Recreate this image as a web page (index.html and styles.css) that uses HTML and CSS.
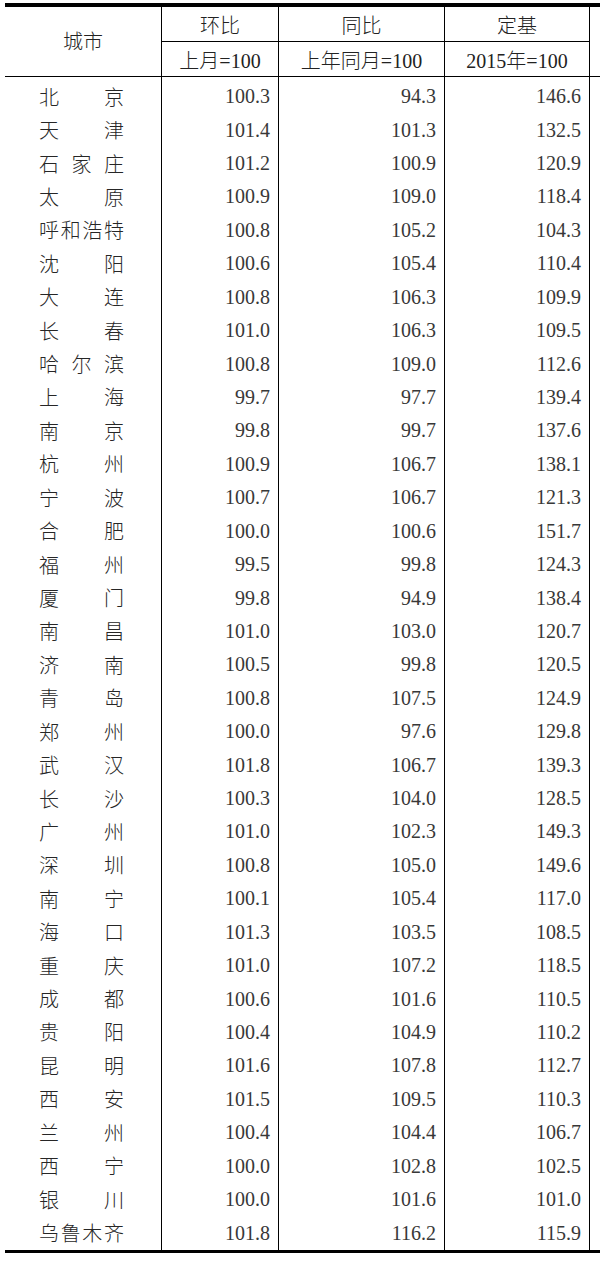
FILE: index.html
```html
<!DOCTYPE html>
<html lang="zh-CN">
<head>
<meta charset="utf-8">
<title>70城房价指数</title>
<link rel="stylesheet" href="styles.css">
</head>
<body>
<div class="page">
  <div class="sheet">
    <div class="cell head city-head">城市</div>
    <div class="cell head h1 v">环比</div>
    <div class="cell head h1 v">同比</div>
    <div class="cell head h1 v">定基</div>
    <div class="cell head extra v"></div>
    <div class="cell head h2 v">上月=100</div>
    <div class="cell head h2 v">上年同月=100</div>
    <div class="cell head h2 v">2015年=100</div>

    <div class="cell city top"><span>北京</span></div><div class="cell num v top">100.3</div><div class="cell num v top">94.3</div><div class="cell num v top">146.6</div><div class="cell v top"></div>
    <div class="cell city"><span>天津</span></div><div class="cell num v">101.4</div><div class="cell num v">101.3</div><div class="cell num v">132.5</div><div class="cell v"></div>
    <div class="cell city"><span>石家庄</span></div><div class="cell num v">101.2</div><div class="cell num v">100.9</div><div class="cell num v">120.9</div><div class="cell v"></div>
    <div class="cell city"><span>太原</span></div><div class="cell num v">100.9</div><div class="cell num v">109.0</div><div class="cell num v">118.4</div><div class="cell v"></div>
    <div class="cell city"><span>呼和浩特</span></div><div class="cell num v">100.8</div><div class="cell num v">105.2</div><div class="cell num v">104.3</div><div class="cell v"></div>
    <div class="cell city"><span>沈阳</span></div><div class="cell num v">100.6</div><div class="cell num v">105.4</div><div class="cell num v">110.4</div><div class="cell v"></div>
    <div class="cell city"><span>大连</span></div><div class="cell num v">100.8</div><div class="cell num v">106.3</div><div class="cell num v">109.9</div><div class="cell v"></div>
    <div class="cell city"><span>长春</span></div><div class="cell num v">101.0</div><div class="cell num v">106.3</div><div class="cell num v">109.5</div><div class="cell v"></div>
    <div class="cell city"><span>哈尔滨</span></div><div class="cell num v">100.8</div><div class="cell num v">109.0</div><div class="cell num v">112.6</div><div class="cell v"></div>
    <div class="cell city"><span>上海</span></div><div class="cell num v">99.7</div><div class="cell num v">97.7</div><div class="cell num v">139.4</div><div class="cell v"></div>
    <div class="cell city"><span>南京</span></div><div class="cell num v">99.8</div><div class="cell num v">99.7</div><div class="cell num v">137.6</div><div class="cell v"></div>
    <div class="cell city"><span>杭州</span></div><div class="cell num v">100.9</div><div class="cell num v">106.7</div><div class="cell num v">138.1</div><div class="cell v"></div>
    <div class="cell city"><span>宁波</span></div><div class="cell num v">100.7</div><div class="cell num v">106.7</div><div class="cell num v">121.3</div><div class="cell v"></div>
    <div class="cell city"><span>合肥</span></div><div class="cell num v">100.0</div><div class="cell num v">100.6</div><div class="cell num v">151.7</div><div class="cell v"></div>
    <div class="cell city"><span>福州</span></div><div class="cell num v">99.5</div><div class="cell num v">99.8</div><div class="cell num v">124.3</div><div class="cell v"></div>
    <div class="cell city"><span>厦门</span></div><div class="cell num v">99.8</div><div class="cell num v">94.9</div><div class="cell num v">138.4</div><div class="cell v"></div>
    <div class="cell city"><span>南昌</span></div><div class="cell num v">101.0</div><div class="cell num v">103.0</div><div class="cell num v">120.7</div><div class="cell v"></div>
    <div class="cell city"><span>济南</span></div><div class="cell num v">100.5</div><div class="cell num v">99.8</div><div class="cell num v">120.5</div><div class="cell v"></div>
    <div class="cell city"><span>青岛</span></div><div class="cell num v">100.8</div><div class="cell num v">107.5</div><div class="cell num v">124.9</div><div class="cell v"></div>
    <div class="cell city"><span>郑州</span></div><div class="cell num v">100.0</div><div class="cell num v">97.6</div><div class="cell num v">129.8</div><div class="cell v"></div>
    <div class="cell city"><span>武汉</span></div><div class="cell num v">101.8</div><div class="cell num v">106.7</div><div class="cell num v">139.3</div><div class="cell v"></div>
    <div class="cell city"><span>长沙</span></div><div class="cell num v">100.3</div><div class="cell num v">104.0</div><div class="cell num v">128.5</div><div class="cell v"></div>
    <div class="cell city"><span>广州</span></div><div class="cell num v">101.0</div><div class="cell num v">102.3</div><div class="cell num v">149.3</div><div class="cell v"></div>
    <div class="cell city"><span>深圳</span></div><div class="cell num v">100.8</div><div class="cell num v">105.0</div><div class="cell num v">149.6</div><div class="cell v"></div>
    <div class="cell city"><span>南宁</span></div><div class="cell num v">100.1</div><div class="cell num v">105.4</div><div class="cell num v">117.0</div><div class="cell v"></div>
    <div class="cell city"><span>海口</span></div><div class="cell num v">101.3</div><div class="cell num v">103.5</div><div class="cell num v">108.5</div><div class="cell v"></div>
    <div class="cell city"><span>重庆</span></div><div class="cell num v">101.0</div><div class="cell num v">107.2</div><div class="cell num v">118.5</div><div class="cell v"></div>
    <div class="cell city"><span>成都</span></div><div class="cell num v">100.6</div><div class="cell num v">101.6</div><div class="cell num v">110.5</div><div class="cell v"></div>
    <div class="cell city"><span>贵阳</span></div><div class="cell num v">100.4</div><div class="cell num v">104.9</div><div class="cell num v">110.2</div><div class="cell v"></div>
    <div class="cell city"><span>昆明</span></div><div class="cell num v">101.6</div><div class="cell num v">107.8</div><div class="cell num v">112.7</div><div class="cell v"></div>
    <div class="cell city"><span>西安</span></div><div class="cell num v">101.5</div><div class="cell num v">109.5</div><div class="cell num v">110.3</div><div class="cell v"></div>
    <div class="cell city"><span>兰州</span></div><div class="cell num v">100.4</div><div class="cell num v">104.4</div><div class="cell num v">106.7</div><div class="cell v"></div>
    <div class="cell city"><span>西宁</span></div><div class="cell num v">100.0</div><div class="cell num v">102.8</div><div class="cell num v">102.5</div><div class="cell v"></div>
    <div class="cell city"><span>银川</span></div><div class="cell num v">100.0</div><div class="cell num v">101.6</div><div class="cell num v">101.0</div><div class="cell v"></div>
    <div class="cell city"><span>乌鲁木齐</span></div><div class="cell num v">101.8</div><div class="cell num v">116.2</div><div class="cell num v">115.9</div><div class="cell v"></div>
  </div>
</div>
</body>
</html>
```
FILE: styles.css
```css
html, body {
  margin: 0;
  padding: 0;
  background: #ffffff;
}

.page {
  width: 600px;
  height: 1279px;
  overflow: hidden;
  background: #ffffff;
}

.sheet {
  display: grid;
  grid-template-columns: 156px 117px 166px 145px 60px;
  grid-template-rows: 35px 35px 36.4px repeat(34, 33.43px);
  width: 644px;
  margin: 3px 0 0 5px;
  border-top: 4px solid #000;
  border-bottom: 3px solid #000;
  font-family: "Noto Sans CJK SC", "Noto Sans", sans-serif;
  font-weight: 300;
  color: #2a2a2a;
}

.cell {
  box-sizing: border-box;
  display: flex;
  align-items: center;
  min-width: 0;
}

.v {
  border-left: 1px solid #000;
}

.head {
  justify-content: center;
  font-size: 20px;
  color: #222;
  border-bottom: 1px solid #000;
  white-space: nowrap;
}

.city-head {
  grid-row: span 2;
  padding-bottom: 2px;
}

.extra {
  grid-row: span 2;
}

.h1 {
  padding-top: 1px;
}

.h2 {
  font-family: "Liberation Serif", "Noto Sans CJK SC", serif;
  font-size: 20px;
  padding-top: 1px;
}

.top {
  padding-top: 3px;
}

.city {
  padding-left: 34px;
  font-size: 20px;
  color: #262626;
}

.city span {
  display: block;
  width: 85px;
  text-align: justify;
  text-align-last: justify;
  line-height: 1;
}

.num {
  justify-content: flex-end;
  padding-right: 8px;
  font-family: "Liberation Serif", "Times New Roman", serif;
  font-weight: 400;
  font-size: 20px;
  color: #383838;
}
```
